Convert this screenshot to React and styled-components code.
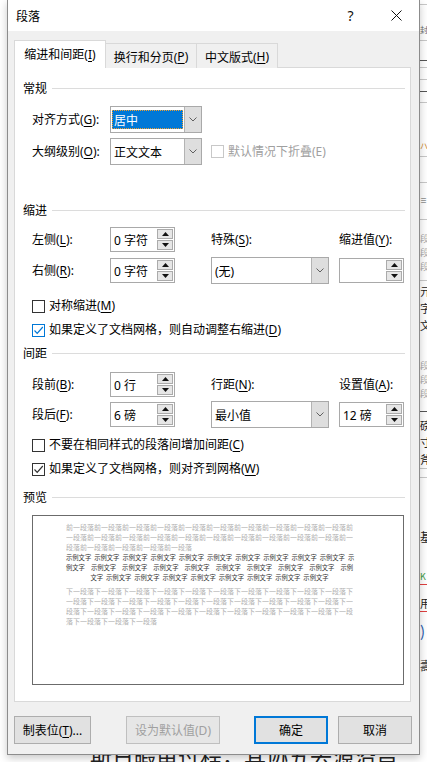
import styled, { createGlobalStyle, css } from "styled-components";

const GlobalStyle = createGlobalStyle`
  html, body { margin: 0; padding: 0; background: #fff; }
  body {
    font-family: "Noto Sans", "Noto Sans CJK SC", sans-serif;
    font-size: 12px;
    color: #000;
    overflow: hidden;
  }
  * { box-sizing: border-box; }
`;

const Screen = styled.div`
  display: grid;
  grid-template-columns: 7px 413px 1fr;
  grid-template-rows: 755px 7px;
  height: 762px;
  overflow: hidden;
  background: #fff;
`;

const Dialog = styled.div`
  grid-column: 2;
  grid-row: 1;
  display: flex;
  flex-direction: column;
  background: #f0f0f0;
  border: 1px solid #8c8c8c;
  border-top: none;
  box-shadow: 0 3px 8px rgba(0, 0, 0, 0.22);
  position: relative;
  z-index: 2;
`;

const TitleBar = styled.div`
  height: 31px;
  background: #fff;
  display: flex;
  align-items: center;
  padding-left: 8px;
`;

const Title = styled.span`
  flex: 1;
  font-size: 12px;
  font-family: "Noto Sans CJK SC", sans-serif;
`;

const TitleButton = styled.div`
  width: ${(p) => p.$w}px;
  height: 31px;
  display: flex;
  align-items: center;
  justify-content: center;
  font-size: 14px;
  color: #111;
`;

const Body = styled.div`
  flex: 1;
  display: flex;
  flex-direction: column;
  padding: 9px 7px 0 6px;
`;

const TabStrip = styled.div`
  display: flex;
  align-items: flex-end;
  height: 28px;
  position: relative;
  z-index: 1;
  margin-bottom: -1px;
`;

const Tab = styled.div`
  width: ${(p) => p.$w}px;
  display: flex;
  align-items: center;
  justify-content: center;
  border: 1px solid #d9d9d9;
  border-bottom: none;
  white-space: nowrap;
  font-size: 12px;
  & + & { margin-left: -1px; }
  ${(p) =>
    p.$active
      ? css`
          height: 28px;
          background: #fff;
          padding-bottom: 1px;
        `
      : css`
          height: 25px;
          background: #f0f0f0;
          padding-top: 1px;
        `}
  u { text-underline-offset: 2px; }
`;

const Panel = styled.div`
  width: 397px;
  height: 635px;
  background: #fff;
  border: 1px solid #d9d9d9;
  padding: 12px 5px 0 8px;
  display: flex;
  flex-direction: column;
`;

const GroupTitle = styled.div`
  display: flex;
  align-items: center;
  gap: 5px;
  height: 16px;
  margin-top: ${(p) => p.$mt || 0}px;
  font-size: 12px;
  white-space: nowrap;
  &::after {
    content: "";
    flex: 1;
    height: 1px;
    background: #dcdcdc;
  }
`;

const Row = styled.div`
  display: grid;
  grid-template-columns: 78px 101px 128px 65px;
  align-items: center;
  margin-left: 9px;
  height: ${(p) => p.$h}px;
  margin-top: ${(p) => p.$mt}px;
`;

const Label = styled.span`
  font-size: 12px;
  line-height: 16px;
  white-space: nowrap;
  color: ${(p) => (p.$disabled ? "#a0a0a0" : "#000")};
  u { text-underline-offset: 2px; }
`;

const SelectBox = styled.div`
  width: ${(p) => p.$w}px;
  height: 27px;
  border: 1px solid #a9a9a9;
  background: #fff;
  display: flex;
  padding: 1px 0 1px 1px;
`;

const SelectValue = styled.div`
  flex: 1;
  display: flex;
  align-items: center;
  padding-left: 2px;
  font-size: 12px;
  white-space: nowrap;
  ${(p) =>
    p.$selected &&
    css`
      background: #0078d7;
      color: #fff;
      outline: 1px dotted #f0a030;
      outline-offset: -1px;
      margin: 2px 1px 2px 0;
    `}
`;

const DropButton = styled.div`
  width: 17px;
  margin: -1px 0;
  background: #dedede;
  border-left: 1px solid #b3b3b3;
  display: flex;
  align-items: center;
  justify-content: center;
`;

const SpinBox = styled.div`
  width: 65px;
  height: 25px;
  border: 1px solid #a9a9a9;
  background: #fff;
  display: flex;
  align-items: center;
  padding: 1px 1px 1px 3px;
`;

const SpinText = styled.span`
  flex: 1;
  font-size: 12px;
  white-space: nowrap;
`;

const SpinButtons = styled.div`
  display: flex;
  flex-direction: column;
  gap: 1px;
  width: 16px;
  height: 21px;
`;

const SpinButton = styled.div`
  flex: 1;
  border: 1px solid #ababab;
  background: #e6e6e6;
  display: flex;
  align-items: center;
  justify-content: center;
`;

const CheckRow = styled.div`
  display: flex;
  align-items: center;
  gap: 4px;
  height: 16px;
  margin-left: ${(p) => (p.$inline ? 0 : 9)}px;
  margin-top: ${(p) => p.$mt || 0}px;
  grid-column: ${(p) => (p.$inline ? "3 / 5" : "auto")};
`;

const Box = styled.span`
  width: 13px;
  height: 13px;
  border: 1px solid ${(p) => p.$color};
  background: #fff;
  display: flex;
  align-items: center;
  justify-content: center;
`;

const Preview = styled.div`
  margin: 10px 0 0 9px;
  width: 372px;
  height: 170px;
  border: 1px solid #6b6b6b;
  padding: 6px 0 0 33px;
`;

const GrayLine = styled.div`
  width: 287px;
  font-size: 7px;
  line-height: 10px;
  height: 10px;
  color: #b0b0b0;
  white-space: nowrap;
  overflow: hidden;
  text-align-last: ${(p) => (p.$full ? "justify" : "left")};
  font-family: "Noto Sans CJK SC", sans-serif;
`;

const GrayBlock = styled.div`
  margin-top: ${(p) => p.$mt || 0}px;
`;

const SampleLine = styled.div`
  width: 287px;
  height: 10px;
  display: flex;
  align-items: center;
  justify-content: ${(p) => (p.$full ? "space-between" : "center")};
  gap: 3px;
  font-size: 6.3px;
  color: #333;
  white-space: nowrap;
  font-family: "Noto Sans CJK SC", sans-serif;
`;

const ButtonRow = styled.div`
  display: flex;
  margin-top: 14px;
`;

const Button = styled.div`
  width: ${(p) => p.$w}px;
  height: 28px;
  margin-left: ${(p) => (p.$ml === "auto" ? "auto" : `${p.$ml || 0}px`)};
  display: flex;
  align-items: center;
  justify-content: center;
  background: #e1e1e1;
  border: 1px solid #adadad;
  font-size: 12px;
  white-space: nowrap;
  ${(p) =>
    p.$default &&
    css`
      border: 2px solid #0078d7;
    `}
  ${(p) =>
    p.$disabled &&
    css`
      color: #a0a0a0;
      border-color: #bfbfbf;
      background: #e6e6e6;
    `}
  u { text-underline-offset: 2px; }
`;

const DocStrip = styled.div`
  grid-column: 3;
  grid-row: 1 / 3;
  display: flex;
  flex-direction: column;
  overflow: hidden;
  background: #fff;
`;

const StripGap = styled.div`
  height: ${(p) => p.$h}px;
  flex-shrink: 0;
`;

const StripRule = styled.div`
  height: 1px;
  flex-shrink: 0;
  background: ${(p) => p.$c || "#c8c8c8"};
`;

const StripGlyph = styled.div`
  height: ${(p) => p.$h}px;
  flex-shrink: 0;
  overflow: hidden;
  font-size: ${(p) => Math.round(p.$h * 0.66)}px;
  line-height: ${(p) => p.$h}px;
  color: ${(p) => p.$c};
  white-space: nowrap;
  font-family: "Noto Sans CJK SC", sans-serif;
`;

const DocLine = styled.div`
  grid-column: 1 / 3;
  grid-row: 2;
  overflow: hidden;
  display: flex;
  align-items: flex-end;
  padding-left: 90px;
`;

const DocText = styled.span`
  font-size: 22px;
  line-height: 22px;
  height: 22px;
  color: #222;
  white-space: nowrap;
  font-family: "Noto Sans CJK SC", sans-serif;
  margin-bottom: -4px;
`;

const Chevron = () => (
  <svg width="8" height="5" viewBox="0 0 8 5">
    <polyline points="0.5,0.5 4,4 7.5,0.5" fill="none" stroke="#606060" strokeWidth="1" />
  </svg>
);

const Tri = ({ up }) => (
  <svg width="7" height="4" viewBox="0 0 7 4">
    <polygon points={up ? "0,4 3.5,0 7,4" : "0,0 3.5,4 7,0"} fill="#111" />
  </svg>
);

const Check = ({ color }) => (
  <svg width="11" height="11" viewBox="0 0 11 11">
    <polyline points="1.5,5.5 4.2,8.3 9.8,2" fill="none" stroke={color} strokeWidth="1.2" />
  </svg>
);

const Select = ({ w, value, selected }) => (
  <SelectBox $w={w}>
    <SelectValue $selected={selected}>{value}</SelectValue>
    <DropButton>
      <Chevron />
    </DropButton>
  </SelectBox>
);

const Spinner = ({ value }) => (
  <SpinBox>
    <SpinText>{value}</SpinText>
    <SpinButtons>
      <SpinButton>
        <Tri up />
      </SpinButton>
      <SpinButton>
        <Tri />
      </SpinButton>
    </SpinButtons>
  </SpinBox>
);

const CheckItem = ({ checked, color = "#333", disabled, inline, mt, children }) => (
  <CheckRow $inline={inline} $mt={mt}>
    <Box $color={disabled ? "#c8c8c8" : color}>{checked && <Check color={color} />}</Box>
    <Label $disabled={disabled}>{children}</Label>
  </CheckRow>
);

const before = ["前一段落".repeat(10) + "前", "一段落前".repeat(10) + "一", "段落前一".repeat(4) + "段落"];
const after = [
  "下一段落".repeat(10) + "下",
  "一段落下".repeat(10) + "一",
  "段落下一".repeat(10) + "段",
  "落下一段落下一段落下一段落",
];
const sample = [
  { full: true, words: [...Array(10).fill("示例文字"), "示"] },
  { full: true, words: ["例文字", ...Array(8).fill("示例文字"), "示例"] },
  { full: false, words: ["文字", ...Array(8).fill("示例文字")] },
];

const strip = [
  ["gap", 4], ["rule"], ["gap", 19], ["glyph", 12, "封", "#666"], ["gap", 4], ["rule"],
  ["gap", 19], ["rule", "#555"], ["gap", 6], ["rule"], ["gap", 11], ["rule"], ["gap", 11],
  ["rule", "#555"], ["gap", 10], ["rule"], ["gap", 37], ["glyph", 12, "ハ", "#d08a2a"],
  ["gap", 4], ["rule"], ["gap", 25], ["rule"], ["gap", 12], ["glyph", 10, "≡", "#555"],
  ["gap", 14], ["rule"], ["gap", 12], ["glyph", 14, "段", "#aaa"], ["glyph", 14, "段", "#aaa"],
  ["glyph", 14, "段", "#aaa"], ["gap", 6], ["rule"], ["gap", 2], ["glyph", 17, "亓", "#222"],
  ["glyph", 17, "字", "#222"], ["glyph", 17, "文", "#222"], ["gap", 25], ["glyph", 14, "段", "#aaa"],
  ["glyph", 14, "段", "#aaa"], ["glyph", 14, "段", "#aaa"], ["gap", 10], ["rule", "#555"],
  ["gap", 5], ["glyph", 17, "磅", "#222"], ["glyph", 17, "寸", "#222"], ["glyph", 17, "斧", "#222"],
  ["rule"], ["gap", 8], ["rule"], ["gap", 50], ["glyph", 18, "基", "#222"], ["gap", 24],
  ["glyph", 14, "K", "#3a9a3a"], ["rule", "#e04040"], ["gap", 10], ["glyph", 16, "用", "#222"],
  ["rule", "#e04040"], ["gap", 8], ["glyph", 22, ")", "#2a5db0"], ["gap", 15],
  ["glyph", 18, "壽", "#333"],
];

export default function App() {
  return (
    <>
      <GlobalStyle />
      <Screen>
        <Dialog>
          <TitleBar>
            <Title>段落</Title>
            <TitleButton $w={45}>?</TitleButton>
            <TitleButton $w={46}>
              <svg width="11" height="11" viewBox="0 0 11 11">
                <path d="M0.5 0.5 L10.5 10.5 M10.5 0.5 L0.5 10.5" stroke="#111" strokeWidth="1" />
              </svg>
            </TitleButton>
          </TitleBar>
          <Body>
            <TabStrip>
              <Tab $w={92} $active>
                缩进和间距(<u>I</u>)
              </Tab>
              <Tab $w={92}>
                换行和分页(<u>P</u>)
              </Tab>
              <Tab $w={82}>
                中文版式(<u>H</u>)
              </Tab>
            </TabStrip>
            <Panel>
              <GroupTitle>常规</GroupTitle>
              <Row $h={27} $mt={10}>
                <Label>
                  对齐方式(<u>G</u>):
                </Label>
                <Select w={92} value="居中" selected />
              </Row>
              <Row $h={27} $mt={5}>
                <Label>
                  大纲级别(<u>O</u>):
                </Label>
                <Select w={92} value="正文文本" />
                <CheckItem inline disabled>
                  默认情况下折叠(E)
                </CheckItem>
              </Row>

              <GroupTitle $mt={37}>缩进</GroupTitle>
              <Row $h={25} $mt={9}>
                <Label>
                  左侧(<u>L</u>):
                </Label>
                <Spinner value="0 字符" />
                <Label>
                  特殊(<u>S</u>):
                </Label>
                <Label>
                  缩进值(<u>Y</u>):
                </Label>
              </Row>
              <Row $h={27} $mt={5}>
                <Label>
                  右侧(<u>R</u>):
                </Label>
                <Spinner value="0 字符" />
                <Select w={118} value="(无)" />
                <Spinner value="" />
              </Row>
              <CheckItem mt={14}>
                对称缩进(<u>M</u>)
              </CheckItem>
              <CheckItem mt={8} checked color="#0078d7">
                如果定义了文档网格，则自动调整右缩进(<u>D</u>)
              </CheckItem>

              <GroupTitle $mt={7}>间距</GroupTitle>
              <Row $h={25} $mt={11}>
                <Label>
                  段前(<u>B</u>):
                </Label>
                <Spinner value="0 行" />
                <Label>
                  行距(<u>N</u>):
                </Label>
                <Label>
                  设置值(<u>A</u>):
                </Label>
              </Row>
              <Row $h={27} $mt={4}>
                <Label>
                  段后(<u>F</u>):
                </Label>
                <Spinner value="6 磅" />
                <Select w={118} value="最小值" />
                <Spinner value="12 磅" />
              </Row>
              <CheckItem mt={9}>
                不要在相同样式的段落间增加间距(<u>C</u>)
              </CheckItem>
              <CheckItem mt={8} checked>
                如果定义了文档网格，则对齐到网格(<u>W</u>)
              </CheckItem>

              <GroupTitle $mt={12}>预览</GroupTitle>
              <Preview>
                {before.map((l, i) => (
                  <GrayLine key={i} $full={i < 2}>
                    {l}
                  </GrayLine>
                ))}
                {sample.map((l, i) => (
                  <SampleLine key={i} $full={l.full}>
                    {l.words.map((w, j) => (
                      <span key={j}>{w}</span>
                    ))}
                  </SampleLine>
                ))}
                <GrayBlock $mt={4}>
                  {after.map((l, i) => (
                    <GrayLine key={i} $full={i < 3}>
                      {l}
                    </GrayLine>
                  ))}
                </GrayBlock>
              </Preview>
            </Panel>
            <ButtonRow>
              <Button $w={77}>
                制表位(<u>T</u>)...
              </Button>
              <Button $w={94} $ml={35} $disabled>
                设为默认值(D)
              </Button>
              <Button $w={74} $ml="auto" $default>
                确定
              </Button>
              <Button $w={74} $ml={10}>
                取消
              </Button>
            </ButtonRow>
          </Body>
        </Dialog>
        <DocStrip>
          {strip.map(([t, a, b, c], i) =>
            t === "gap" ? (
              <StripGap key={i} $h={a} />
            ) : t === "rule" ? (
              <StripRule key={i} $c={a} />
            ) : (
              <StripGlyph key={i} $h={a} $c={c}>
                {b}
              </StripGlyph>
            )
          )}
        </DocStrip>
        <DocLine>
          <DocText>斯日暇审过程，其协五去源沿旨</DocText>
        </DocLine>
      </Screen>
    </>
  );
}
